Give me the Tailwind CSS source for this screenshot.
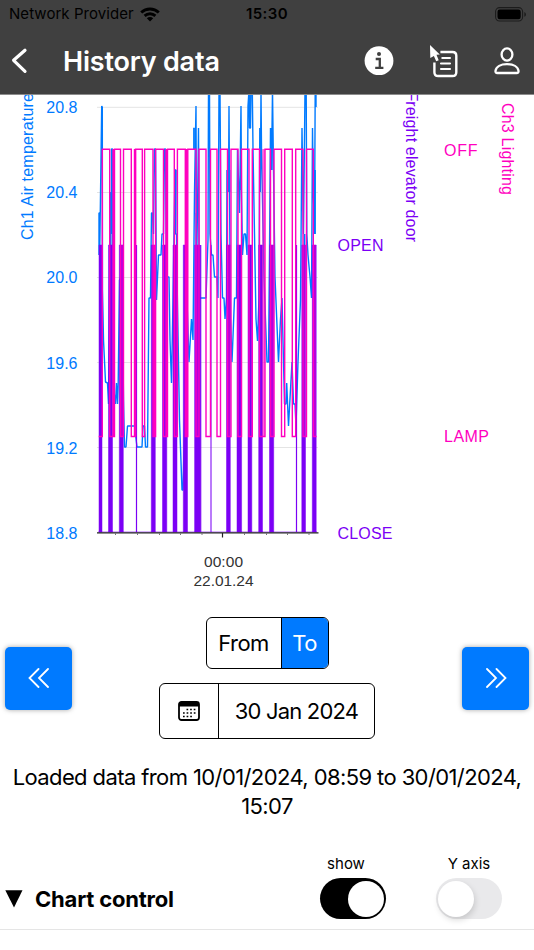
<!DOCTYPE html>
<html lang="en">
  <head>
    <meta charset="UTF-8" />
    <meta name="viewport" content="width=device-width, initial-scale=1.0" />
    <title>History data</title>
    <script src="https://cdn.jsdelivr.net/npm/@tailwindcss/browser@4"></script>
  </head>
  <body class="h-[950px] overflow-hidden bg-white font-['Inter',sans-serif] text-black">
    <header class="h-[95px] bg-[#404040] border-b border-[#8c8c8c]">
      <!-- Status bar -->
      <div class="grid grid-cols-3 items-center h-7 pl-[9px] pr-[9px]">
        <div class="flex items-center gap-[6px] text-[15px] tracking-[0.05px] whitespace-nowrap">
          <span>Network Provider</span>
          <svg class="w-5 h-[15px] shrink-0" viewBox="0 0 20 15">
            <path d="M1.2 5.5C6.2 .8 13.8 .8 18.8 5.5M4.6 8.9C7.700 6 12.300 6 15.400 8.900" fill="none" stroke="#000" stroke-width="2.9" />
            <path d="M10 14.4 6.8 11.3C8.6 9.7 11.4 9.7 13.2 11.3Z" />
          </svg>
        </div>
        <span class="text-center text-[15px] font-semibold tracking-[0.4px]">15:30</span>
        <svg class="-mr-[2px] w-8 h-[15px] justify-self-end" viewBox="0 0 32 15">
          <rect x=".6" y=".6" width="27" height="13.4" rx="4" fill="none" stroke="#1c1c1c" stroke-width="1.1" />
          <rect x="2.5" y="2.4" width="23.2" height="9.8" rx="2.3" />
          <path d="M29.3 5v4.8q1.7-.8 1.7-2.4T29.3 5Z" fill="#1c1c1c" />
        </svg>
      </div>

      <!-- Title bar -->
      <div class="flex items-center h-[66px] pl-[10px] pr-[14px] text-white">
        <svg class="w-[18px] h-[28px]" viewBox="0 0 18 28" fill="none" stroke="currentColor" stroke-width="3.2" stroke-linecap="round" stroke-linejoin="round">
          <path d="M15 3.2 3.6 13.3 15 24.4" />
        </svg>
        <h1 class="ml-[35px] grow text-[27px] font-semibold leading-none tracking-[-0.2px]">History data</h1>
        <div class="flex items-center">
          <svg class="w-[30px] h-[30px]" viewBox="0 0 30 30">
            <circle cx="15" cy="14.7" r="14.4" fill="#fff" />
            <circle cx="15" cy="8" r="2" fill="#404040" />
            <path d="M11.7 13h4.1v8.6M11.2 21.8h8.2" fill="none" stroke="#404040" stroke-width="2.3" />
          </svg>
          <svg class="ml-[35px] w-[30px] h-[34px]" viewBox="0 0 30 34">
            <path d="M11.4 8H23.5Q27.3 8 27.3 11.8V28.2Q27.3 32 23.5 32H9.2Q5.4 32 5.4 28.2V18.5" fill="none" stroke="#fff" stroke-width="2.4" />
            <path d="M13.3 14h7.7M12 19.5h9M12 25h9" stroke="#fff" stroke-width="2.1" stroke-linecap="round" />
            <path d="M1 1 10.8 10.4 7.5 10.8 9.7 16.2 7.2 17.3 4.9 11.9 1.3 14Z" fill="#fff" />
          </svg>
          <svg class="ml-[35px] w-[26px] h-[28px]" viewBox="0 0 26 28" fill="none" stroke="#fff" stroke-width="2.3">
            <ellipse cx="13" cy="7.5" rx="5.4" ry="6.1" />
            <path d="M3.4 26H22.6Q24.8 26 24.5 23.8C23.9 19.8 19.3 17.2 13 17.2S2.1 19.8 1.5 23.8Q1.2 26 3.4 26Z" />
          </svg>
        </div>
      </div>
    </header>

    <!-- Chart -->
    <svg class="block w-full h-[510px] font-['Liberation_Sans',sans-serif] text-[16px]" viewBox="0 95 534 510">
      <path d="M97 107.3H318M97 192.5H318M97 277.5H318M97 362.5H318M97 447.5H318" stroke="#e4e4e4" />
      <g fill="#007aff" text-anchor="end">
        <text x="77.500" y="113">20.8</text>
        <text x="77.500" y="198">20.4</text>
        <text x="77.500" y="283">20.0</text>
        <text x="77.500" y="368.500">19.6</text>
        <text x="77.500" y="453.500">19.2</text>
        <text x="77.500" y="538.500">18.8</text>
      </g>
      <text transform="translate(33 240) rotate(-90)" fill="#007aff" textLength="147">Ch1 Air temperature</text>
      <text transform="translate(406 242) rotate(90)" text-anchor="end" fill="#7b00f5" textLength="185">Ch2 Freight elevator door</text>
      <text transform="translate(502 103) rotate(90)" fill="#ff00bf" textLength="92">Ch3 Lighting</text>
      <text x="337.500" y="251" fill="#7b00f5" textLength="46">OPEN</text>
      <text x="337.500" y="538.500" fill="#7b00f5" textLength="55">CLOSE</text>
      <text x="444" y="155.500" fill="#ff00bf" textLength="33.500">OFF</text>
      <text x="444" y="442" fill="#ff00bf" textLength="45">LAMP</text>

      <!-- Air temperature -->
      <polyline fill="none" stroke="#007aff" stroke-width="1.4" stroke-linejoin="bevel" points="99,255 99,213 99.700,213 99.700,255 101.700,106 102.300,107 102.500,290 103.500,340 105.500,382 107.500,383 108.500,404 109.500,300 110.500,192 111.500,234 111.500,149 112.500,149 113,383 115.500,404 116.500,383 117.500,404 118.200,383 119.500,280 122,275 123.500,400 124.500,447 126,447 127.500,426 134.500,426 137,447 142,447 143,426 144.500,426 145.500,447 147.500,447 149,298 150.500,298 151.500,213 152.500,213 153.500,234 154.500,149 155.500,149 156.500,300 158.500,255 161,255 162,234 163.500,234 164.500,149 165.500,149 166.500,277 169,277 170,340 171.500,383 173,300 175,170 176,170 175.500,234 176.500,234 177,277 179.500,420 182,490 183,490 185.500,383 187,300 189,362 191.500,319 193,340 194.500,192 196,106 196.500,255 197.500,213 198.500,128 199.300,298 206,298 208,240 208.500,90 209.500,90 210,234 211.500,255 213,255 214.500,277 217,277 218,298 219,90 220,90 221,234 222.500,298 224,298 225,319 226.500,298 227,170 228.500,192 229,106 229.500,192 230.500,319 232,362 234.500,298 236.500,298 237.500,149 239.500,213 241,106 241.500,192 242.500,255 244,234 245.500,234 247,255 248,106 249,90 249.500,128 250.500,128 251,90 252.300,90 253,149 256,319 257.500,341 259,298 259.800,128 260.300,192 261,90 261.500,149 264,277 267,362 268.500,362 269.500,255 270.500,128 271.500,170 272.500,90 273.500,170 275,277 278.500,362 280.500,319 282,298 284.500,404 286,404 286.700,383 288.500,426 292,362 293.500,404 295,404 296,426 298,362 300.500,300 302,128 303.500,234 305,90 306.200,90 306.800,234 308,255 310,277 311.500,298 312.500,128 313.300,190 314.500,234 315.200,90 316,107 316,90" />
      <path d="M194 127.700V149M196.500 298V213M250 90V128M227.700 170V192M229.500 170V192M241 149V190M271.700 128V170M304.500 234V280M315 170V234M175.500 170V234M110.700 192V260" stroke="#007aff" stroke-width="1.800" />

      <!-- Freight elevator door -->
      <path d="M98 532H317" stroke="#7b00f5" stroke-opacity=".6" />
      <g fill="#7b00f5" stroke="#7b00f5" stroke-opacity=".5">
        <path d="M99 245h3v287h-3ZM108.500 245h4v287h-4ZM119.300 245h4v287h-4ZM151.300 245h4v287h-4ZM162.500 245h4.300v287h-4.300ZM173 245h4v287h-4ZM183.300 245h4.200v287h-4.200ZM194.600 245h5.400v287h-5.400ZM226.500 245h3.800v287h-3.800ZM237 245h4.600v287h-4.600ZM248 245h3.800v287h-3.800ZM258.700 245h3.800v287h-3.800ZM269.500 245h4.200v287h-4.200ZM301.800 245h3.700v287h-3.700ZM312.300 245h3.900v287h-3.900Z" />
        <path d="M136.500 245V532M200.700 245V532M296.500 245V532" stroke-opacity="1" stroke-width="1.200" />
        <path d="M211 245V532" stroke-opacity=".8" stroke-width="1.300" />
      </g>

      <!-- Lighting -->
      <path d="M98.700 436.500H102.300V149.300H109.700V436.500H114.500V149.300H120.500V436.500H123.500V149.300H131.300V436.500H135.500V149.300H142.300V436.500H144.600V149.300H153V436.500H155.600V149.300H163.500V436.500H167.500V149.300H174.300V436.500H177.400V149.300H185.300V436.500H187.800V149.300H196V436.500H199V149.300H206V436.500H210.500V149.300H217V436.500H220.500V149.300H227.500V436.500H231V149.300H238V436.500H241.500V149.300H249V436.500H252.300V149.300H259.500V436.500H265V149.300H270.500V436.500H274V149.300H281.500V436.500H284.700V149.300H292.300V436.500H295.700V149.300H303V436.500H306.500V149.300H313.300V436.500H316.500" fill="none" stroke="#ff00bf" stroke-width="1.400" />
      <path d="M113.500 149V436M135 149V436M154.500 245V436M166.500 149V436M186.600 149V436" stroke="#ff00bf" stroke-width="2.400" />
      <path d="M263.500 149V436" stroke="#ff00bf" stroke-opacity=".6" stroke-width="2.600" />
      <path d="M304.500 245V436M315 245V436M122 245V436M176 245V436M197.500 245V436M229 245V436M272 245V436" stroke="#ff00bf" stroke-opacity=".45" stroke-width="2" />

      <!-- Time axis -->
      <path d="M97 532.800H318.500M222.500 533V537.500" stroke="#222" stroke-width="1.200" />
      <path d="M115.500 533V535M137.500 533V535M159.500 533V535M180.500 533V535M202 533V535M244.500 533V535M266.500 533V535M287.500 533V535M309 533V535" stroke="#777" />
      <g class="text-[15.500px]" fill="#333" text-anchor="middle">
        <text x="223.500" y="567" textLength="39">00:00</text>
        <text x="223.500" y="586" textLength="60">22.01.24</text>
      </g>
    </svg>

    <!-- Period picker -->
    <main>
      <div class="flex justify-between items-center h-[146px] px-[5px]">
        <button class="flex items-center justify-center w-[67px] h-[63px] rounded-[5px] bg-[#007aff] shadow-[0_0_5px_rgba(0,0,0,0.35)]">
          <svg class="w-[22px] h-5" viewBox="0 0 22 20" fill="none" stroke="#fff" stroke-width="1.8" stroke-linecap="round">
            <path d="M10.500 1 1.500 10 10.500 19M20 1 11 10 20 19" />
          </svg>
        </button>
        <div class="flex flex-col items-center gap-[14px]">
          <div class="flex h-[52px] w-[123px] overflow-hidden rounded-md border-[1.5px] border-black text-[22px] tracking-[-0.6px]">
            <button class="w-[75px] border-r border-black">From</button>
            <button class="grow bg-[#007aff] text-white">To</button>
          </div>
          <div class="flex h-[56px] w-[216px] rounded-md border-[1.5px] border-black text-[22px]">
            <button class="flex items-center justify-center w-[59px] border-r border-black">
              <svg class="w-[22px] h-5" viewBox="0 0 22 20">
                <rect x="1" y="1" width="20" height="18" rx="2.5" fill="none" stroke="#000" stroke-width="1.800" />
                <path d="M1 5.500V3.500Q1 1 3.500 1H18.500Q21 1 21 3.500V5.500Z" />
                <path d="M8.500 8.500H18M5 12H18M5 15.500H14.500" stroke="#000" stroke-width="1.700" stroke-dasharray="1.700 1.900" />
              </svg>
            </button>
            <span class="flex grow items-center justify-center tracking-[-0.8px]">30 Jan 2024</span>
          </div>
        </div>
        <button class="flex items-center justify-center w-[67px] h-[63px] rounded-[5px] bg-[#007aff] shadow-[0_0_5px_rgba(0,0,0,0.35)]">
          <svg class="w-[22px] h-5" viewBox="0 0 22 20" fill="none" stroke="#fff" stroke-width="1.8" stroke-linecap="round">
            <path d="M2 1 11 10 2 19M11.500 1 20.500 10 11.500 19" />
          </svg>
        </button>
      </div>

      <p class="mt-[12px] h-[58px] text-center text-[22px] leading-[29px] tracking-[-0.6px] whitespace-nowrap">
        Loaded data from 10/01/2024, 08:59 to 30/01/2024,<br />15:07
      </p>

      <!-- Chart control -->
      <div class="mt-[33px] flex h-[76px] border-b border-[#e5e5e5] pl-[5px] pr-8">
        <div class="mt-[28px] flex h-[34px] grow items-center gap-3">
          <svg class="w-[18px] h-[18px]" viewBox="0 0 18 18"><path d="M.3.300H17.500L9 17.500Z" /></svg>
          <h2 class="text-[22px] font-bold tracking-[-0.2px]">Chart control</h2>
        </div>
        <div class="flex gap-[50px] text-[15px] leading-[18px]">
          <div class="flex w-[66px] flex-col">
            <span class="pr-[14px] pt-[1px] text-center">show</span>
            <div class="mt-[5px] flex h-[41px] items-center justify-end rounded-full bg-black pr-[2px]">
              <div class="size-9 rounded-full bg-white"></div>
            </div>
          </div>
          <div class="flex w-[66px] flex-col">
            <span class="pt-[1px] text-center">Y axis</span>
            <div class="mt-[5px] flex h-[41px] items-center rounded-full bg-[#e9e9eb] pl-[2px]">
              <div class="size-9 rounded-full bg-white shadow-[1px_3px_6px_rgba(0,0,0,0.15)]"></div>
            </div>
          </div>
        </div>
      </div>
    </main>
  </body>
</html>
